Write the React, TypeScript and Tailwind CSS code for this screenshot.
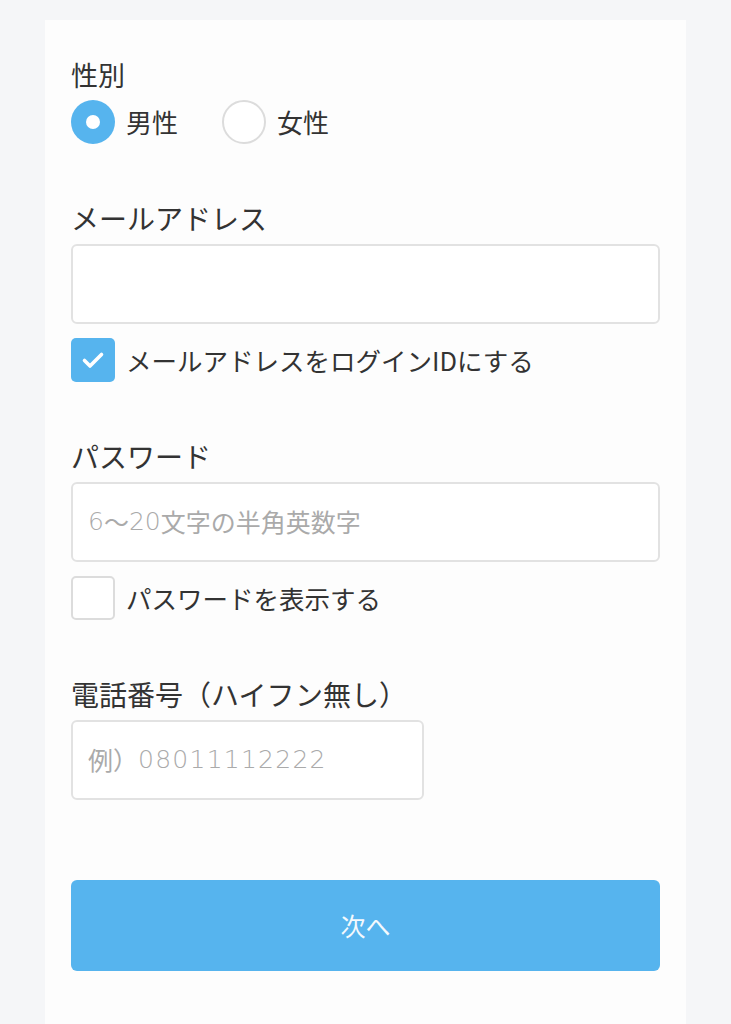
import React from "react";

const font = { fontFamily: '"Noto Sans CJK JP", "Noto Sans", sans-serif' };
const digitFont = { fontFamily: '"DejaVu Sans", "Noto Sans CJK JP", sans-serif' };

function Radio({ checked, label }: { checked: boolean; label: string }) {
  return (
    <label className="flex items-center gap-[11px]">
      {checked ? (
        <span className="flex h-[44px] w-[44px] items-center justify-center rounded-full bg-[#56b4ee]">
          <span className="h-[14px] w-[14px] rounded-full bg-white" />
        </span>
      ) : (
        <span className="h-[44px] w-[44px] rounded-full border-2 border-[#dcdcdc] bg-white" />
      )}
      <span className="text-[26px] leading-none text-[#333]">{label}</span>
    </label>
  );
}

function Check({ checked, label }: { checked: boolean; label: string }) {
  return (
    <label className="mt-[14px] flex items-center gap-[11px]">
      {checked ? (
        <span className="flex h-[44px] w-[44px] items-center justify-center rounded-[5px] bg-[#56b4ee]">
          <svg width="24" height="20" viewBox="0 0 24 20" fill="none">
            <path d="M3.5 10.5l5.5 5.5L20.5 4.5" stroke="white" strokeWidth="3.6" strokeLinecap="round" strokeLinejoin="round" />
          </svg>
        </span>
      ) : (
        <span className="h-[44px] w-[44px] rounded-[5px] border-2 border-[#dcdcdc] bg-white" />
      )}
      <span className="text-[25.5px] leading-none text-[#333]">{label}</span>
    </label>
  );
}

export default function App() {
  return (
    <div className="min-h-[1024px] bg-[#f5f6f8] pt-[20px]" style={font}>
      <div className="ml-[45px] min-h-[1004px] w-[641px] bg-[#fdfdfd] px-[26px] pt-[41px]">
        <div className="text-[27px] leading-none text-[#333]">性別</div>
        <div className="mt-[12px] flex gap-[44px]">
          <Radio checked label="男性" />
          <Radio checked={false} label="女性" />
        </div>

        <div className="mt-[60px] text-[28px] leading-none text-[#333]">メールアドレス</div>
        <div className="mt-[12px] h-[80px] w-full rounded-[6px] border-2 border-[#e2e2e2] bg-white" />
        <Check checked label="メールアドレスをログインIDにする" />

        <div className="mt-[60px] text-[28px] leading-none text-[#333]">パスワード</div>
        <div className="mt-[12px] flex h-[80px] w-full items-center rounded-[6px] border-2 border-[#e2e2e2] bg-white px-[15px] text-[25px] text-[#aaaaaa]">
          <span className="font-light" style={digitFont}>6</span>〜<span className="font-light" style={digitFont}>20</span>文字の半角英数字
        </div>
        <Check checked={false} label="パスワードを表示する" />

        <div className="mt-[60px] text-[28px] leading-none text-[#333]">電話番号（ハイフン無し）</div>
        <div className="mt-[12px] flex h-[80px] w-[353px] items-center rounded-[6px] border-2 border-[#e2e2e2] bg-white px-[15px] text-[25px] text-[#aaaaaa]">
          例）<span className="font-light tracking-[0.05em]" style={digitFont}>08011112222</span>
        </div>

        <button className="mt-[80px] flex h-[91px] w-full items-center justify-center rounded-[6px] bg-[#56b4ee] text-[25px] text-[#f4f9fd]">
          次へ
        </button>
      </div>
    </div>
  );
}
